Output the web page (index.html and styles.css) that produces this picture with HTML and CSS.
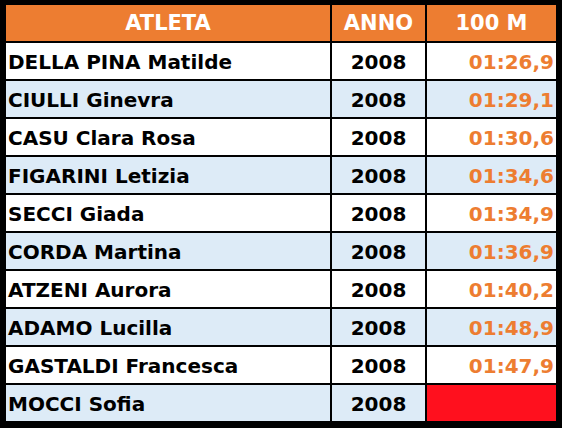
FILE: index.html
```html
<!DOCTYPE html>
<html lang="it">
<head>
<meta charset="utf-8">
<title>Risultati 100 M</title>
<link rel="stylesheet" href="styles.css">
</head>
<body>
<div class="table">
  <div class="cell head">ATLETA</div>
  <div class="cell head">ANNO</div>
  <div class="cell head">100 M</div>

  <div class="cell name">DELLA PINA Matilde</div>
  <div class="cell year">2008</div>
  <div class="cell time">01:26,9</div>

  <div class="cell name alt">CIULLI Ginevra</div>
  <div class="cell year alt">2008</div>
  <div class="cell time alt">01:29,1</div>

  <div class="cell name">CASU Clara Rosa</div>
  <div class="cell year">2008</div>
  <div class="cell time">01:30,6</div>

  <div class="cell name alt">FIGARINI Letizia</div>
  <div class="cell year alt">2008</div>
  <div class="cell time alt">01:34,6</div>

  <div class="cell name">SECCI Giada</div>
  <div class="cell year">2008</div>
  <div class="cell time">01:34,9</div>

  <div class="cell name alt">CORDA Martina</div>
  <div class="cell year alt">2008</div>
  <div class="cell time alt">01:36,9</div>

  <div class="cell name">ATZENI Aurora</div>
  <div class="cell year">2008</div>
  <div class="cell time">01:40,2</div>

  <div class="cell name alt">ADAMO Lucilla</div>
  <div class="cell year alt">2008</div>
  <div class="cell time alt">01:48,9</div>

  <div class="cell name">GASTALDI Francesca</div>
  <div class="cell year">2008</div>
  <div class="cell time">01:47,9</div>

  <div class="cell name alt">MOCCI Sofia</div>
  <div class="cell year alt">2008</div>
  <div class="cell time missing"></div>
</div>
</body>
</html>
```
FILE: styles.css
```css
html, body {
  margin: 0;
  padding: 0;
  background: #ffffff;
}

.table {
  width: 562px;
  height: 428px;
  box-sizing: border-box;
  background: #000000;
  padding: 5px 6px 7px 6px;
  display: grid;
  grid-template-columns: 324px 93px 129px;
  grid-template-rows: repeat(11, 36px);
  column-gap: 2px;
  row-gap: 2px;
  font-family: "DejaVu Sans", "Liberation Sans", sans-serif;
  font-weight: bold;
}

.cell {
  background: #ffffff;
  color: #000000;
  font-size: 20px;
  line-height: 33px;
  padding-top: 3px;
  white-space: nowrap;
  overflow: hidden;
}

.cell.alt {
  background: #ddebf7;
}

.head {
  background: #ed7d31;
  color: #ffffff;
  font-size: 21px;
  line-height: 36px;
  padding-top: 0;
  text-align: center;
}

.name {
  padding-left: 2px;
  text-align: left;
}

.year {
  text-align: center;
}

.time {
  color: #ed7d31;
  text-align: right;
  padding-right: 2px;
}

.missing {
  background: #ff101e;
}
```
